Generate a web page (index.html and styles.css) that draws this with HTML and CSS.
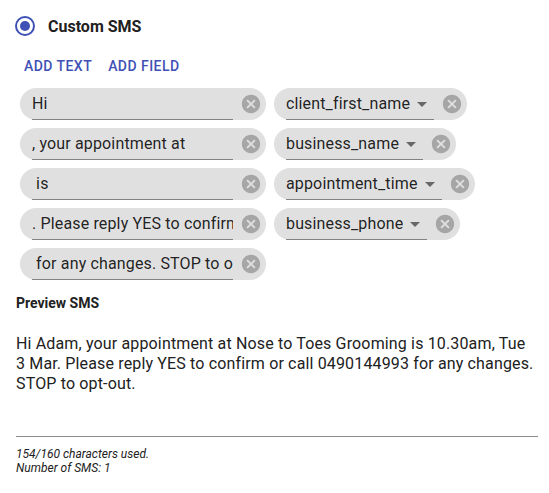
FILE: index.html
```html
<!DOCTYPE html>
<html lang="en">
<head>
    <meta charset="UTF-8">
    <title>Custom SMS</title>
    <link rel="stylesheet" href="styles.css">
</head>
<body>
    <div class="sms-editor">
        <label class="option">
            <span class="radio"><span class="radio-dot"></span></span>
            <span class="option-label">Custom SMS</span>
        </label>

        <div class="actions">
            <button class="text-btn">Add text</button>
            <button class="text-btn">Add field</button>
        </div>

        <div class="chips">
            <div class="chip">
                <input class="chip-input" type="text" value="Hi">
                <svg class="chip-delete" viewBox="0 0 24 24"><path d="M12 2C6.47 2 2 6.470 2 12s4.47 10 10 10 10-4.47 10-10S17.53 2 12 2zm5 13.59L15.59 17 12 13.41 8.41 17 7 15.59 10.59 12 7 8.41 8.41 7 12 10.59 15.59 7 17 8.41 13.41 12 17 15.59z"/></svg>
            </div>
            <div class="chip">
                <div class="chip-select"><span>client_first_name</span><svg class="arrow" viewBox="0 0 24 24"><path d="M7 10l5 5 5-5z"/></svg></div>
                <svg class="chip-delete" viewBox="0 0 24 24"><path d="M12 2C6.47 2 2 6.47 2 12s4.47 10 10 10 10-4.47 10-10S17.53 2 12 2zm5 13.59L15.59 17 12 13.41 8.41 17 7 15.59 10.59 12 7 8.41 8.41 7 12 10.59 15.59 7 17 8.41 13.41 12 17 15.59z"/></svg>
            </div>
            <div class="chip">
                <input class="chip-input" type="text" value=", your appointment at">
                <svg class="chip-delete" viewBox="0 0 24 24"><path d="M12 2C6.47 2 2 6.47 2 12s4.47 10 10 10 10-4.47 10-10S17.53 2 12 2zm5 13.59L15.59 17 12 13.41 8.41 17 7 15.59 10.59 12 7 8.41 8.41 7 12 10.59 15.59 7 17 8.41 13.41 12 17 15.59z"/></svg>
            </div>
            <div class="chip">
                <div class="chip-select"><span>business_name</span><svg class="arrow" viewBox="0 0 24 24"><path d="M7 10l5 5 5-5z"/></svg></div>
                <svg class="chip-delete" viewBox="0 0 24 24"><path d="M12 2C6.47 2 2 6.47 2 12s4.47 10 10 10 10-4.47 10-10S17.53 2 12 2zm5 13.59L15.59 17 12 13.41 8.41 17 7 15.59 10.59 12 7 8.41 8.41 7 12 10.59 15.59 7 17 8.41 13.41 12 17 15.59z"/></svg>
            </div>
            <div class="chip">
                <input class="chip-input" type="text" value=" is">
                <svg class="chip-delete" viewBox="0 0 24 24"><path d="M12 2C6.47 2 2 6.47 2 12s4.47 10 10 10 10-4.47 10-10S17.53 2 12 2zm5 13.59L15.59 17 12 13.41 8.41 17 7 15.59 10.59 12 7 8.41 8.41 7 12 10.59 15.59 7 17 8.41 13.41 12 17 15.59z"/></svg>
            </div>
            <div class="chip">
                <div class="chip-select"><span>appointment_time</span><svg class="arrow" viewBox="0 0 24 24"><path d="M7 10l5 5 5-5z"/></svg></div>
                <svg class="chip-delete" viewBox="0 0 24 24"><path d="M12 2C6.47 2 2 6.47 2 12s4.47 10 10 10 10-4.47 10-10S17.53 2 12 2zm5 13.59L15.59 17 12 13.41 8.41 17 7 15.59 10.59 12 7 8.41 8.41 7 12 10.59 15.59 7 17 8.41 13.41 12 17 15.59z"/></svg>
            </div>
            <div class="chip">
                <input class="chip-input" type="text" value=". Please reply YES to confirm or call">
                <svg class="chip-delete" viewBox="0 0 24 24"><path d="M12 2C6.47 2 2 6.47 2 12s4.47 10 10 10 10-4.47 10-10S17.53 2 12 2zm5 13.59L15.59 17 12 13.41 8.41 17 7 15.59 10.59 12 7 8.41 8.41 7 12 10.59 15.59 7 17 8.41 13.41 12 17 15.59z"/></svg>
            </div>
            <div class="chip">
                <div class="chip-select"><span>business_phone</span><svg class="arrow" viewBox="0 0 24 24"><path d="M7 10l5 5 5-5z"/></svg></div>
                <svg class="chip-delete" viewBox="0 0 24 24"><path d="M12 2C6.47 2 2 6.47 2 12s4.47 10 10 10 10-4.47 10-10S17.53 2 12 2zm5 13.59L15.59 17 12 13.41 8.41 17 7 15.59 10.59 12 7 8.41 8.41 7 12 10.59 15.59 7 17 8.41 13.41 12 17 15.59z"/></svg>
            </div>
            <div class="chip">
                <input class="chip-input" type="text" value=" for any changes. STOP to opt-out.">
                <svg class="chip-delete" viewBox="0 0 24 24"><path d="M12 2C6.47 2 2 6.47 2 12s4.47 10 10 10 10-4.47 10-10S17.53 2 12 2zm5 13.59L15.59 17 12 13.41 8.41 17 7 15.59 10.59 12 7 8.41 8.41 7 12 10.59 15.59 7 17 8.41 13.41 12 17 15.59z"/></svg>
            </div>
        </div>

        <h2 class="preview-title">Preview SMS</h2>
        <p class="preview-text">Hi Adam, your appointment at Nose to Toes Grooming is 10.30am, Tue 3 Mar. Please reply YES to confirm or call 0490144993 for any changes. STOP to opt-out.</p>

        <div class="counter">
            <div>154/160 characters used.</div>
            <div>Number of SMS: 1</div>
        </div>
    </div>
</body>
</html>
```

FILE: styles.css
```css
body {
    margin: 0;
    font-family: Roboto, "Liberation Sans", sans-serif;
    color: rgba(0, 0, 0, 0.87);
    background: #fff;
}
.sms-editor {
    padding: 16px 11px 0 16px;
}
/* radio */
.option {
    display: flex;
    align-items: center;
    height: 20px;
}
.radio {
    box-sizing: border-box;
    width: 20px;
    height: 20px;
    margin-left: -1px;
    border: 2px solid #3f51b5;
    border-radius: 50%;
    display: flex;
    align-items: center;
    justify-content: center;
}
.radio-dot {
    width: 10px;
    height: 10px;
    border-radius: 50%;
    background: #3f51b5;
}
.option-label {
    margin-left: 13px;
    font-size: 16px;
    font-weight: 700;
    color: #212121;
}
/* buttons */
.actions {
    display: flex;
    margin-top: 12px;
    height: 36px;
}
.text-btn {
    padding: 0 8px;
    border: none;
    background: none;
    font-family: inherit;
    font-size: 14px;
    font-weight: 500;
    letter-spacing: 0.45px;
    text-transform: uppercase;
    color: #3f51b5;
    cursor: pointer;
}
/* chips */
.chips {
    display: flex;
    flex-wrap: wrap;
    gap: 8px;
    margin-top: 4px;
    padding-left: 4px;
}
.chip {
    display: flex;
    align-items: stretch;
    height: 32px;
    padding-left: 12px;
    border-radius: 16px;
    background: #e0e0e0;
}
.chip-input {
    width: 201px;
    padding: 0;
    border: none;
    border-bottom: 1px solid rgba(0, 0, 0, 0.42);
    background: transparent;
    font-family: inherit;
    font-size: 16px;
    letter-spacing: 0.15px;
    color: rgba(0, 0, 0, 0.87);
    outline: none;
}
.chip-select {
    display: flex;
    align-items: center;
    border-bottom: 1px solid rgba(0, 0, 0, 0.42);
    font-size: 16px;
    letter-spacing: 0.15px;
}
.arrow {
    width: 24px;
    height: 24px;
    fill: rgba(0, 0, 0, 0.54);
}
.chip-delete {
    align-self: center;
    width: 22px;
    height: 22px;
    margin: 0 4px 0 7px;
    fill: rgba(0, 0, 0, 0.26);
}
/* preview */
.preview-title {
    margin: 15px 0 0;
    font-size: 14px;
    font-weight: 700;
    line-height: 16px;
    color: #212121;
}
.preview-text {
    margin: 23px 0 0;
    font-size: 16px;
    line-height: 20px;
    letter-spacing: 0.15px;
    color: #212121;
}
.counter {
    margin-top: 42px;
    padding-top: 10px;
    border-top: 1px solid #8c8c8c;
    font-size: 12px;
    font-style: italic;
    line-height: 14px;
    color: #212121;
}
```
